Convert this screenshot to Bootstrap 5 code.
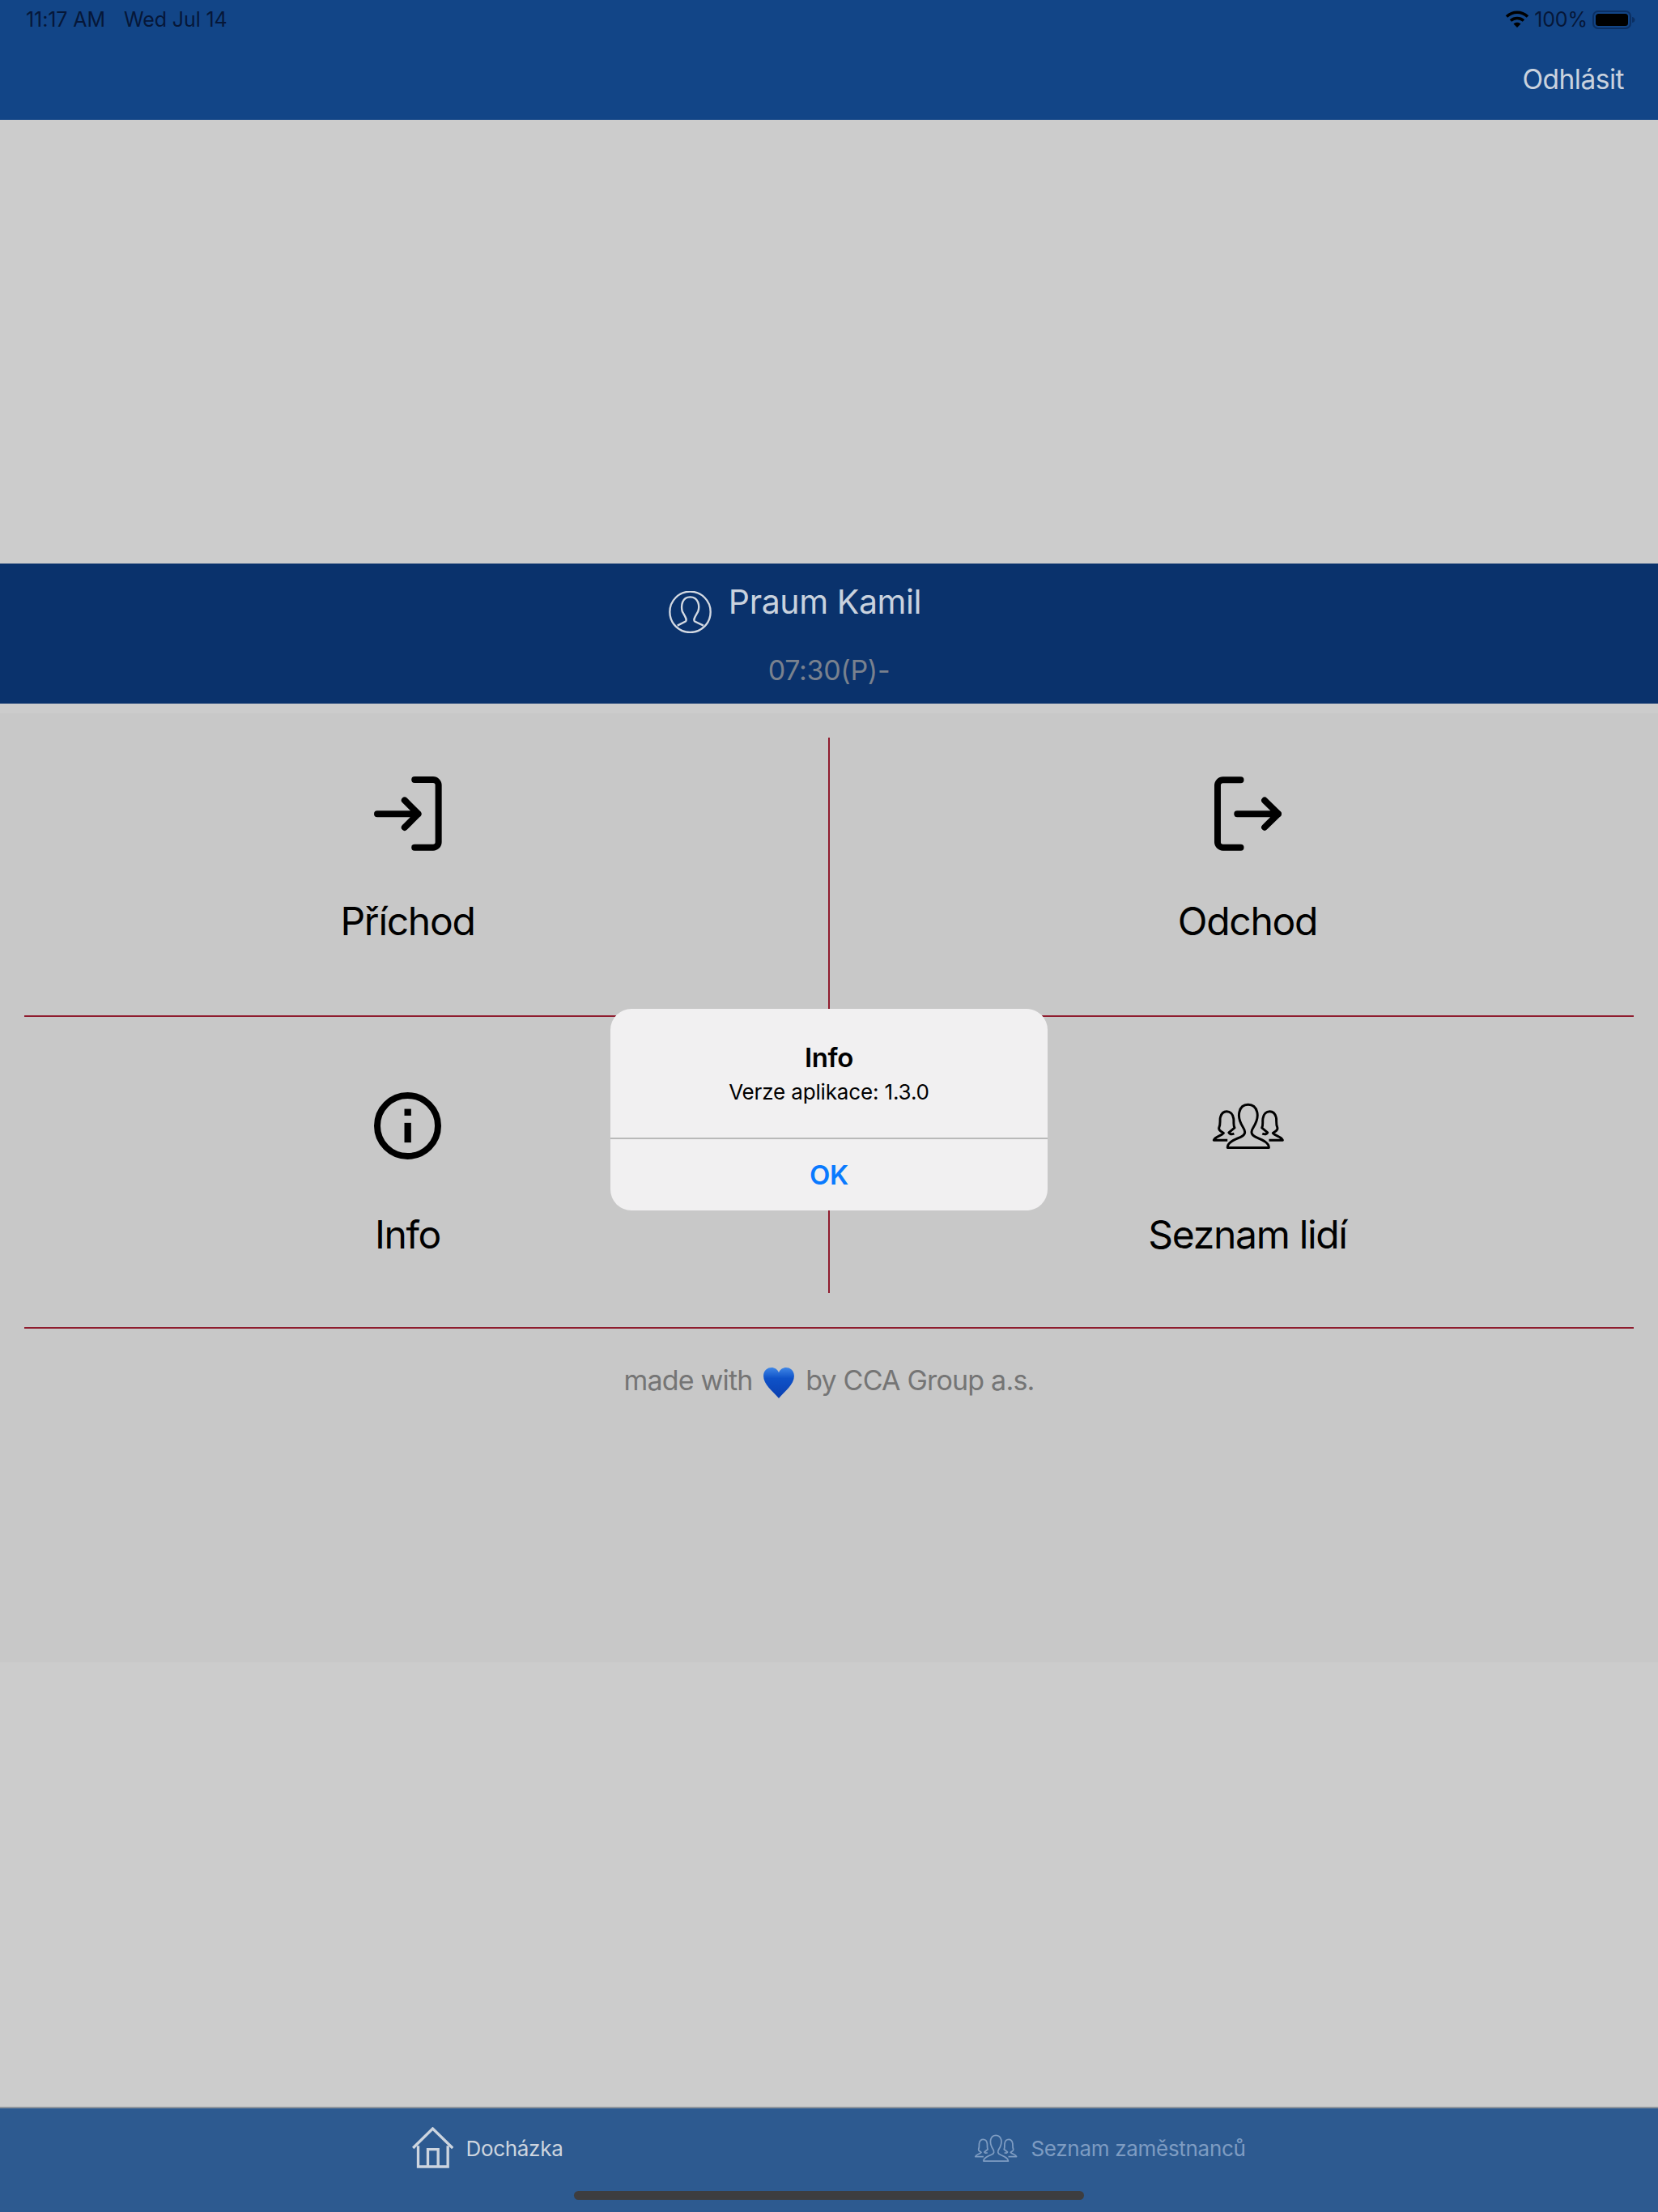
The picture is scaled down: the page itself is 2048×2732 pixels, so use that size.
<!doctype html>
<html lang="cs"><head><meta charset="utf-8"><title>Docházka</title>
<link href="https://cdn.jsdelivr.net/npm/bootstrap@5.3.0/dist/css/bootstrap.min.css" rel="stylesheet">
<style>
body{font-family:Inter,"Liberation Sans",sans-serif;background:#ccc;height:2732px;overflow:hidden;position:relative}
.top-hdr{background:#124587;height:148px;padding:0 27px 0 32px}
.stat-row{height:48px;font-size:25px;color:#061738;line-height:48px;letter-spacing:-.1px}
.stat-gap{gap:23px}
.pct-txt{margin-left:-2px;margin-right:2px}
.logout-wrap{padding-right:15px;padding-top:28px}
.logout-lnk{color:#c9d2de;font-size:33.5px;line-height:44px;letter-spacing:-.5px;text-decoration:none}
.gap-top{height:548px}
.person-bar{background:#0a326c;height:173px}
.person-name{color:#c9d2de;font-size:41px;line-height:52px;padding-top:21px;padding-right:84px;letter-spacing:-.4px;height:110px;gap:21px}
.person-time{color:#79818e;font-size:34px;line-height:44px;letter-spacing:-.3px}
.svg-pers{margin-top:13px}
.strip-gap{height:12px}
.main-area{background:#c8c8c8;height:1172px}
.tile{text-align:center;color:#000;font-size:48px;line-height:58px;letter-spacing:-1.3px}
.tile-l{border-right:2px solid #8f1c2e;padding-right:16px;margin-right:-1px}
.tile-r{padding-left:10px}
.tile-a{margin-top:30px;padding-top:48px;height:343px}
.tile-b{padding-top:88px;height:341px}
.icon-box{height:92px;margin-bottom:58px}
.tile-b .icon-box{margin-bottom:60px}
.red-rule{height:2px;background:#8f1c2e;margin:0 30px}
.gap-42{height:42px}
.made-by{color:#757575;font-size:34px;line-height:44px;margin-top:42px;letter-spacing:-.8px}
.heart-ic{margin:0 4px}
.tab-bar{background:#2d5a90;height:130px;border-top:2px solid #8d949c;gap:507px;padding-top:23px;position:relative;font-size:26px;line-height:40px;letter-spacing:-.3px}
.tab-on{color:#cdd5df;gap:15px;height:51px}
.tab-off{color:#7e9cc2;gap:15px;height:51px}
.tab-lbl{padding-top:3px}
.home-ind{position:absolute;left:709px;width:630px;bottom:15px;height:11px;background:#3d3d3f;border-radius:6px}
.alert-box{position:absolute;left:754px;top:1246px;width:540px;height:249px;background:#f1f0f1;border-radius:26px;text-align:center;color:#000}
.alert-body{height:161px;padding-top:39px;border-bottom:2px solid #b9b9b9}
.alert-ttl{font-size:33px;font-weight:600;line-height:42px;letter-spacing:-.4px}
.alert-msg{font-size:26px;line-height:36px;margin-top:4px;letter-spacing:-.15px}
.alert-ok{font-size:33px;font-weight:600;color:#0a7aff;line-height:88px;letter-spacing:-.2px}
</style></head><body class="d-flex flex-column">

<svg width="0" height="0" class="position-absolute"><defs>
<symbol id="grp" viewBox="100 60 285 185">
<g fill="none" stroke="currentColor" stroke-width="9" stroke-linejoin="round">
<path d="M165 235C165 215 190 205 215 195C232 188 235 175 225 160C212 140 205 120 210 100C215 78 230 72 243 72C258 72 272 80 277 100C282 120 275 140 262 160C252 175 255 188 272 195C295 205 322 215 322 235Z"/>
<path d="M165 207H113C118 192 140 192 150 180C140 172 130 170 133 160C140 145 135 130 138 120C142 105 152 98 162 98C175 98 186 108 188 125C190 140 186 150 192 160L170 178C172 184 180 186 190 182"/>
<path d="M165 207H113C118 192 140 192 150 180C140 172 130 170 133 160C140 145 135 130 138 120C142 105 152 98 162 98C175 98 186 108 188 125C190 140 186 150 192 160L170 178C172 184 180 186 190 182" transform="translate(487 0) scale(-1 1)"/>
</g></symbol>
<linearGradient id="hrt" x1="0" y1="0" x2="0" y2="1"><stop offset="0" stop-color="#3f86e6"/><stop offset=".35" stop-color="#0f52c8"/><stop offset="1" stop-color="#0a3fb0"/></linearGradient>
</defs></svg>

<header class="top-hdr flex-shrink-0">
  <div class="stat-row d-flex justify-content-between align-items-center">
    <div class="d-flex stat-gap"><span>11:17 AM</span><span>Wed Jul 14</span></div>
    <div class="d-flex align-items-center">
      <svg width="30" height="24" viewBox="0 0 30 24" class="me-2"><g fill="none" stroke="#000" stroke-width="3.6"><path d="M2 8.500C9.500 1.500 20.500 1.500 28 8.500"/><path d="M7 13.500C11.500 9.500 18.500 9.500 23 13.500"/></g><path d="M10.500 17.500C13 15.200 17 15.200 19.500 17.500L15 22Z" fill="#000"/></svg>
      <span class="pct-txt">100%</span>
      <svg width="54" height="24" viewBox="0 0 54 24" class="ms-1"><rect x="1" y="2" width="46" height="21" rx="6" fill="none" stroke="#0b2f63" stroke-width="2"/><rect x="4" y="5" width="40" height="15" rx="3.500" fill="#000"/><path d="M49 9c2.500.5 3.500 2 3.500 3.500S51.500 15.500 49 16Z" fill="#0b2f63"/></svg>
    </div>
  </div>
  <div class="logout-wrap text-end"><a href="#" class="logout-lnk d-inline-block">Odhlásit</a></div>
</header>

<div class="gap-top flex-shrink-0"></div>

<section class="person-bar flex-shrink-0 text-center">
  <div class="person-name d-flex justify-content-center align-items-start">
    <svg width="53" height="52" viewBox="200 150 158 155" class="svg-pers"><g fill="none" stroke="#d3d9e2" stroke-width="7"><circle cx="279" cy="227" r="75"/><path d="M232 277L262 262C270 256 258 240 250 225C245 205 248 172 279 172C310 172 315 205 308 225C300 240 288 256 296 262L328 277"/></g></svg>
    <span>Praum Kamil</span>
  </div>
  <div class="person-time">07:30(P)-</div>
</section>

<div class="strip-gap flex-shrink-0"></div>

<main class="main-area flex-shrink-0">
  <div class="row g-0">
    <div class="col-6"><div class="tile tile-l tile-a">
      <div class="icon-box"><svg width="84" height="92" viewBox="187 177 251 275"><g fill="none" stroke="#000" stroke-width="24" stroke-linecap="round" stroke-linejoin="round"><path d="M337 189H405a20 20 0 0 1 20 20V419a20 20 0 0 1-20 20H337"/><path d="M199 315H350M300 265L350 315L300 365"/></g></svg></div>
      Příchod</div></div>
    <div class="col-6"><div class="tile tile-r tile-a">
      <div class="icon-box"><svg width="84" height="92" viewBox="237 87 253 275"><g fill="none" stroke="#000" stroke-width="24" stroke-linecap="round" stroke-linejoin="round"><path d="M338 99H272a20 20 0 0 0-20 20V330a20 20 0 0 0 20 20H338"/><path d="M325 225H478M427 175L478 225L427 275"/></g></svg></div>
      Odchod</div></div>
  </div>
  <div class="red-rule"></div>
  <div class="row g-0">
    <div class="col-6"><div class="tile tile-l tile-b">
      <div class="icon-box d-flex align-items-center justify-content-center"><svg width="83" height="83" viewBox="127 88 250 250"><circle cx="252" cy="213" r="113" fill="none" stroke="#000" stroke-width="24"/><rect x="240" y="150" width="25" height="25"/><rect x="240" y="202" width="25" height="73"/></svg></div>
      Info</div></div>
    <div class="col-6"><div class="tile tile-r tile-b">
      <div class="icon-box d-flex align-items-center justify-content-center"><svg width="93" height="61"><use href="#grp"/></svg></div>
      Seznam lidí</div></div>
  </div>
  <div class="gap-42"></div>
  <div class="red-rule"></div>
  <div class="made-by text-center">made with <svg width="40" height="40" viewBox="0 0 38 38" class="align-middle heart-ic"><path d="M19 37C12 29 1 21 1 11C1 4 6 1 10.500 1C14 1 17.500 3 19 7C20.500 3 24 1 27.500 1C32 1 37 4 37 11C37 21 26 29 19 37Z" fill="url(#hrt)"/></svg> by CCA Group a.s.</div>
</main>

<div class="flex-grow-1"></div>

<nav class="tab-bar flex-shrink-0 d-flex justify-content-center align-items-start">
  <div class="tab-on d-flex align-items-center">
    <svg width="51" height="51" viewBox="88 112 152 153"><g fill="none" stroke="#cdd5df" stroke-width="10"><path d="M91 190L164 118L238 190"/><path d="M110 182V259H220V182"/><path d="M146 259V195H184V259"/></g></svg>
    <span class="tab-lbl">Docházka</span>
  </div>
  <div class="tab-off d-flex align-items-center">
    <svg width="56" height="36"><use href="#grp"/></svg>
    <span class="tab-lbl">Seznam zaměstnanců</span>
  </div>
  <div class="home-ind"></div>
</nav>

<div class="alert-box d-flex flex-column">
  <div class="alert-body">
    <div class="alert-ttl">Info</div>
    <div class="alert-msg">Verze aplikace: 1.3.0</div>
  </div>
  <div class="alert-ok">OK</div>
</div>
</body></html>
